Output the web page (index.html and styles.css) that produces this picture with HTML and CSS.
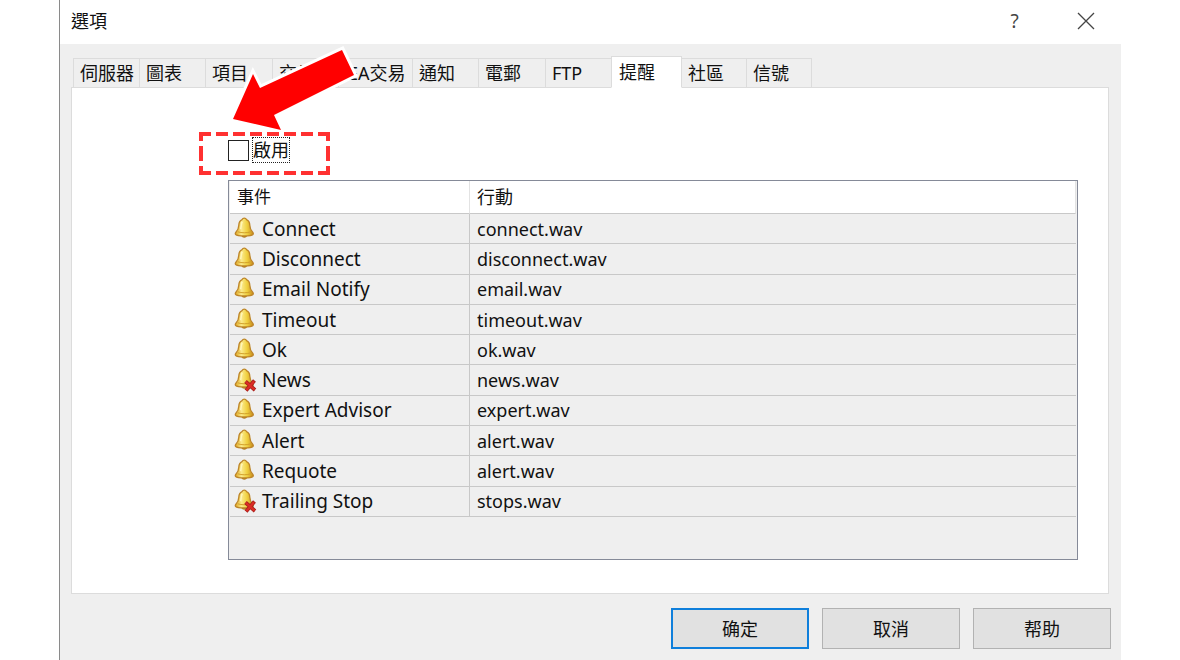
FILE: index.html
```html
<!DOCTYPE html>
<html lang="zh-Hant">
<head>
<meta charset="utf-8">
<title>選項</title>
<link rel="stylesheet" href="styles.css">
</head>
<body>
<svg class="defs" aria-hidden="true">
  <defs>
    <linearGradient id="gold" x1="0" x2="1" y1="0" y2="0">
      <stop offset="0" stop-color="#dfa722"/><stop offset=".35" stop-color="#fbe98a"/><stop offset=".65" stop-color="#f0d140"/><stop offset="1" stop-color="#c98c1c"/>
    </linearGradient>
    <symbol id="bell" viewBox="0 0 24 24">
      <path d="M7.500 19h5.500c-.5 2.300-5 2.300-5.500 0z" fill="#b07a1c"/>
      <path d="M10.300 1.200c1.300 0 1.900.7 2.200 1.400 2.300 1 3.200 3 3.300 5.600.1 3 .7 4.800 2.900 7 .5.600.7 1.700.2 2.300-1.800 2-15.400 2-17.200 0-.5-.6-.3-1.700.2-2.300 2.200-2.200 2.800-4 2.900-7 .1-2.600 1-4.600 3.300-5.600.3-.7.900-1.400 2.200-1.400z" fill="url(#gold)" stroke="#bd8528" stroke-width="1.300"/>
      <path d="M3.800 14.800c3.500 1.300 9.500 1.300 13 0" fill="none" stroke="#d2a02a" stroke-width="1"/>
      <path d="M8.300 4.800c-1.300 1.800-1 4.600-1.700 7.400" fill="none" stroke="#fff6b8" stroke-width="1.500"/>
    </symbol>
    <symbol id="bell-off" viewBox="0 0 24 24">
      <use href="#bell" width="24" height="24"/>
      <path d="M11.500 13.500l9.500 8.500M20.500 12.500l-8.500 10" fill="none" stroke="#a8201c" stroke-width="3.800"/>
      <path d="M11.800 13.800l8.700 7.800M20 13.200l-7.600 8.800" fill="none" stroke="#dc2c25" stroke-width="2.200"/>
    </symbol>
  </defs>
</svg>
<main class="dialog">
  <header class="titlebar">
    <h1 class="title">選項</h1>
    <button class="caption" aria-label="Help">?</button>
    <button class="caption" aria-label="Close"><svg class="close" viewBox="0 0 18 18"><path d="M1 1l16 16M17 1L1 17" fill="none" stroke="#444" stroke-width="1.300"/></svg></button>
  </header>
  <div class="content">
    <nav class="tabs" role="tablist">
      <button class="tab" role="tab">伺服器</button>
      <button class="tab" role="tab">圖表</button>
      <button class="tab long" role="tab">項目</button>
      <button class="tab" role="tab">交易</button>
      <button class="tab wide" role="tab">EA交易</button>
      <button class="tab" role="tab">通知</button>
      <button class="tab long" role="tab">電郵</button>
      <button class="tab" role="tab">FTP</button>
      <button class="tab selected" role="tab" aria-selected="true">提醒</button>
      <button class="tab short" role="tab">社區</button>
      <button class="tab short" role="tab">信號</button>
    </nav>
    <section class="panel">
      <div class="enable">
        <label class="check"><input class="box" type="checkbox"><span class="focus">啟用</span></label>
        <svg class="arrow" viewBox="0 0 132 92" aria-hidden="true"><path d="M5 75L25 30L32 44L114 6L126 31L46 71L53 86Z" fill="#fff" stroke="#fff" stroke-width="6"/><path d="M5 75L25 30L32 44L114 6L126 31L46 71L53 86Z" fill="#f00"/></svg>
        <svg class="marker" viewBox="0 0 131 43" aria-hidden="true"><g fill="none" stroke="#ff3131" stroke-width="4"><path d="M0 2H131M0 41H131" stroke-dasharray="12 5" stroke-dashoffset="0"/><path d="M2 0V43M129 0V43" stroke-dasharray="9 5 15 5 9"/></g></svg>
      </div>
      <div class="list">
        <table class="events">
          <thead><tr><th class="event small">事件</th><th>行動</th></tr></thead>
          <tbody>
            <tr><td><span class="name"><svg class="icon"><use href="#bell"/></svg>Connect</span></td><td>connect.wav</td></tr>
            <tr><td><span class="name"><svg class="icon"><use href="#bell"/></svg>Disconnect</span></td><td>disconnect.wav</td></tr>
            <tr><td><span class="name"><svg class="icon"><use href="#bell"/></svg>Email Notify</span></td><td>email.wav</td></tr>
            <tr><td><span class="name"><svg class="icon"><use href="#bell"/></svg>Timeout</span></td><td>timeout.wav</td></tr>
            <tr><td><span class="name"><svg class="icon"><use href="#bell"/></svg>Ok</span></td><td>ok.wav</td></tr>
            <tr><td><span class="name"><svg class="icon"><use href="#bell-off"/></svg>News</span></td><td>news.wav</td></tr>
            <tr><td><span class="name"><svg class="icon"><use href="#bell"/></svg>Expert Advisor</span></td><td>expert.wav</td></tr>
            <tr><td><span class="name"><svg class="icon"><use href="#bell"/></svg>Alert</span></td><td>alert.wav</td></tr>
            <tr><td><span class="name"><svg class="icon"><use href="#bell"/></svg>Requote</span></td><td>alert.wav</td></tr>
            <tr><td><span class="name"><svg class="icon"><use href="#bell-off"/></svg>Trailing Stop</span></td><td>stops.wav</td></tr>
          </tbody>
        </table>
      </div>
    </section>
    <footer class="actions" lang="zh-Hans">
      <button class="action primary">确定</button>
      <button class="action">取消</button>
      <button class="action">帮助</button>
    </footer>
  </div>
</main>
</body>
</html>
```
FILE: styles.css
```css
* { box-sizing: border-box; }
body {
  margin: 0;
  background: #fff;
  color: #111;
  font: 18px/24px "Noto Sans", "Noto Sans CJK TC", sans-serif;
}
button { font: inherit; color: inherit; padding: 0; }
.defs { position: absolute; width: 0; height: 0; }
.dialog {
  margin: 0 59px;
  min-height: 100vh;
  display: flex;
  flex-direction: column;
  border-left: 1px solid #8a8a8a;
}
.titlebar {
  display: flex;
  align-items: center;
  height: 44px;
  padding: 0 0 2px 11px;
}
.title { flex: 1; margin: 0; font-size: 18px; font-weight: 400; }
.caption {
  display: flex;
  align-items: center;
  justify-content: center;
  width: 71px;
  height: 40px;
  border: 0;
  background: none;
  color: #444;
  font-size: 19px;
}
.close { width: 18px; height: 18px; }
.content {
  flex: 1;
  display: flex;
  flex-direction: column;
  padding: 12px 10px 11px 11px;
  background: #efefef;
}
.tabs {
  display: flex;
  align-items: flex-end;
  padding: 0 2px;
  margin-bottom: -1px;
}
.tab {
  flex: none;
  width: 67px;
  height: 30px;
  margin-right: -1px;
  padding-left: 6px;
  border: 1px solid #dcdcdc;
  background: #efefef;
  text-align: left;
  white-space: nowrap;
}
.long { width: 68px; }
.short { width: 66px; }
.wide { width: 75px; padding-left: 9px; }
.selected {
  position: relative;
  width: 71px;
  height: 32px;
  padding-left: 7px;
  background: #fff;
  border-bottom-color: #fff;
}
.panel {
  flex: 1;
  margin-right: 2px;
  padding: 44px 30px 32px 156px;
  border: 1px solid #dcdcdc;
  background: #fff;
}
.enable { position: relative; height: 48px; padding-top: 6px; }
.check { display: inline-flex; align-items: center; gap: 4px; }
.box {
  appearance: none;
  width: 21px;
  height: 21px;
  margin: 0;
  border: 1px solid #222;
  background: #fff;
}
.focus { outline: 1px dotted #222; }
.marker { position: absolute; left: -29px; top: 0; width: 131px; height: 43px; }
.arrow { position: absolute; left: 0; top: -88px; width: 132px; height: 92px; overflow: visible; }
.list {
  height: 380px;
  padding: 0 1px;
  border: 1px solid #858a98;
  background: #efefef;
}
.events {
  width: 100%;
  height: 336px;
  border-collapse: separate;
  border-spacing: 0;
  table-layout: fixed;
}
.events th {
  height: 33px;
  padding: 0 7px;
  background: #fff;
  border-bottom: 1px solid #c8c8c8;
  border-right: 1px solid #e3e3e3;
  font-weight: 400;
  text-align: left;
}
.events .event { width: 240px; }
.events .small { font-size: 17px; }
.events td {
  padding: 0 7px;
  border-bottom: 1px solid #c8c8c8;
}
.events td:first-child {
  padding: 0 4px;
  border-right: 1px solid #c8c8c8;
  font-size: 19px;
}
.name { display: flex; align-items: center; gap: 4px; }
.icon { width: 24px; height: 24px; flex: none; }
.actions {
  display: flex;
  justify-content: flex-end;
  gap: 13px;
  padding-top: 14px;
}
.action {
  width: 138px;
  height: 41px;
  border: 1px solid #b2b2b2;
  background: #e1e1e1;
  font-family: "Noto Sans", "Noto Sans CJK SC", sans-serif;
}
.primary { border: 2px solid #0f7fdb; }
```
